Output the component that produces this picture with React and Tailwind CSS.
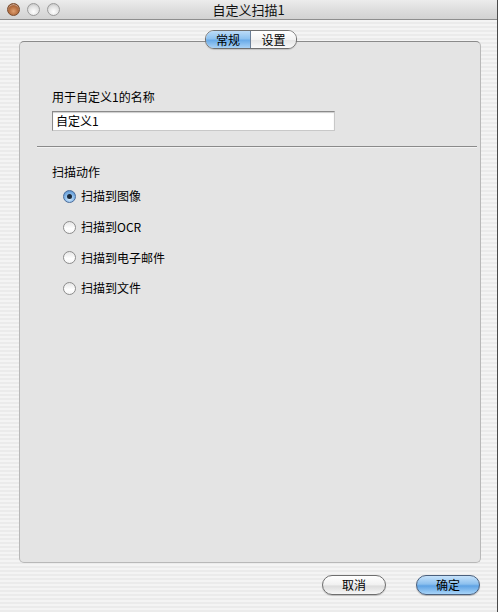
import React from "react";

const font = { fontFamily: '"Lucida Grande", "Noto Sans CJK SC", "Noto Sans", sans-serif' };

const Light = ({ close }) => (
  <div
    className={
      close
        ? "w-[13px] h-[13px] rounded-full border border-[#7a4a2a] bg-[radial-gradient(circle_at_50%_65%,#e0a070_0%,#b0683a_55%,#7a4426_100%)] shadow-[inset_0_1px_1px_rgba(255,255,255,0.5)]"
        : "w-[13px] h-[13px] rounded-full border border-[#9a9a9a] bg-[radial-gradient(circle_at_50%_70%,#ffffff_0%,#e2e2e2_55%,#b9b9b9_100%)]"
    }
  />
);

const Radio = ({ checked, label }) => (
  <div className="flex items-center h-[30.7px]">
    <div
      className={
        checked
          ? "w-[13px] h-[13px] rounded-full border border-[#4a6c9a] bg-[radial-gradient(circle_at_50%_70%,#d6ecff_0%,#7fb3e6_55%,#4d86c4_100%)] flex items-center justify-center"
          : "w-[13px] h-[13px] rounded-full border border-[#8c8c8c] bg-[linear-gradient(180deg,#e6e6e6_0%,#ffffff_60%,#f4f4f4_100%)]"
      }
    >
      {checked && <div className="w-[5px] h-[5px] rounded-full bg-[#1c2a3a]" />}
    </div>
    <span className="ml-[5px] text-[12px] leading-[14px] text-black">{label}</span>
  </div>
);

export default function App() {
  return (
    <div className="w-[500px] h-[612px] bg-white" style={font}>
      <div className="w-[498px] h-[612px] flex flex-col border-r border-[#4a4a4a] bg-[repeating-linear-gradient(180deg,#f4f4f4_0px,#f4f4f4_2px,#ebebeb_2px,#ebebeb_4px)]">
        {/* title bar */}
        <div className="h-[20px] relative flex items-center border-b border-[#8e8e8e] bg-[linear-gradient(180deg,#ececec_0%,#dedede_50%,#d2d2d2_100%)]">
          <div className="flex items-center gap-[7px] pl-[7px]">
            <Light close />
            <Light />
            <Light />
          </div>
          <div className="absolute inset-0 flex items-center justify-center text-[13px] leading-[16px] text-[#111]">
            自定义扫描1
          </div>
        </div>

        {/* panel */}
        <div className="relative ml-[19px] mt-[21px] w-[462px] h-[522px] rounded-[5px] border border-[#b8b8b8] border-t-[#8a8a8a] bg-[#e4e4e4]">
          <div className="absolute left-[185px] -top-[12px] flex h-[19px] rounded-[9px] border border-[#707070] overflow-hidden text-[12px] leading-[17px] shadow-[0_1px_1px_rgba(0,0,0,0.15)]">
            <div className="w-[45px] text-center text-black bg-[linear-gradient(180deg,#bcdcf8_0%,#8ec2f0_45%,#6aabe8_55%,#a9d2f6_100%)] border-r border-[#6b7f98]">
              常规
            </div>
            <div className="w-[45px] text-center text-black bg-[linear-gradient(180deg,#ffffff_0%,#f3f3f3_50%,#e6e6e6_55%,#fafafa_100%)]">
              设置
            </div>
          </div>

          <div className="pl-[32px] pt-[48px]">
            <div className="text-[12px] leading-[14px] text-black">用于自定义1的名称</div>
            <div className="mt-[7px] w-[283px] h-[20px] border border-[#8a8a8a] border-b-[#c8c8c8] border-r-[#c8c8c8] bg-white px-[3px] text-[12px] leading-[18px] text-black shadow-[inset_0_1px_1px_rgba(0,0,0,0.2)]">
              自定义1
            </div>
          </div>

          <div className="ml-[17px] mr-[3px] mt-[15px] h-[1px] bg-[#8a8a8a] border-b border-[#f2f2f2] box-content" />

          <div className="pl-[32px] pt-[17px]">
            <div className="text-[12px] leading-[14px] text-black">扫描动作</div>
            <div className="pl-[11px] mt-[2px] flex flex-col">
              <Radio checked label="扫描到图像" />
              <Radio label="扫描到OCR" />
              <Radio label="扫描到电子邮件" />
              <Radio label="扫描到文件" />
            </div>
          </div>
        </div>

        {/* buttons */}
        <div className="flex justify-end gap-[30px] pr-[17px] mt-[12px]">
          <button className="w-[64px] h-[20px] rounded-full border border-[#6e6e6e] text-[12px] leading-[18px] text-black bg-[linear-gradient(180deg,#ffffff_0%,#f0f0f0_50%,#dcdcdc_55%,#f6f6f6_100%)] shadow-[0_1px_1px_rgba(0,0,0,0.2)]">
            取消
          </button>
          <button className="w-[64px] h-[20px] rounded-full border border-[#4a5f7c] text-[12px] leading-[18px] text-black bg-[linear-gradient(180deg,#c6e2fa_0%,#8cc0ee_45%,#5fa3e4_55%,#a8d4f8_100%)] shadow-[0_1px_1px_rgba(0,0,0,0.25)]">
            确定
          </button>
        </div>
      </div>
    </div>
  );
}
